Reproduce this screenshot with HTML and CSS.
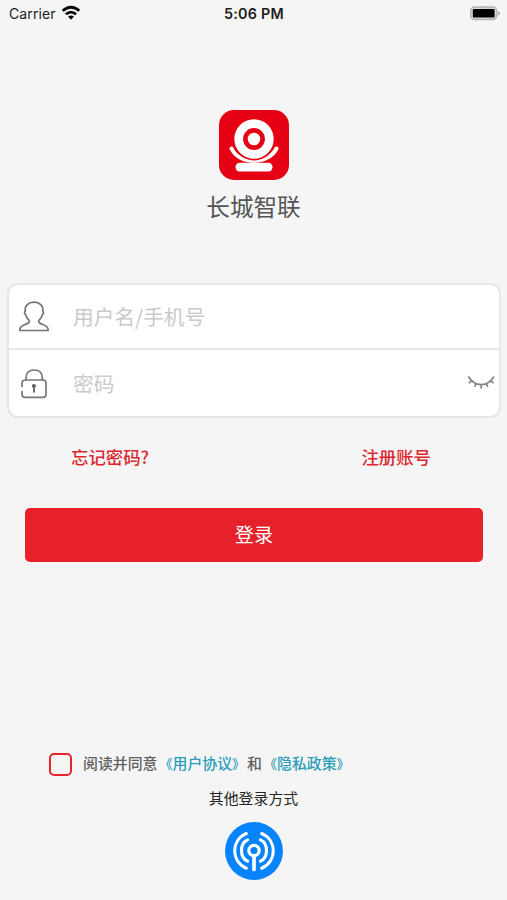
FILE: index.html
```
<!DOCTYPE html>
<html lang="zh-CN">
<head>
<meta charset="utf-8">
<title>长城智联</title>
<link rel="stylesheet" href="styles.css">
</head>
<body>
<header class="status">
  <div class="carrier"><span>Carrier</span>
    <svg width="20" height="16" viewBox="0 0 20 16"><g fill="none" stroke="#080808" stroke-width="2.8"><path d="M1.7 5.8Q10 -1.2 18.3 5.8"/><path d="M4.9 9.3Q10 5 15.1 9.3"/></g><path d="M7 11.6Q10 9.2 13 11.6L10 14.7Z" fill="#080808"/></svg>
  </div>
  <div class="time">5:06 PM</div>
  <svg class="battery" width="32" height="16" viewBox="0 0 32 16"><rect x="1.7" y="2" width="26" height="12.6" rx="4" fill="#d9d9d9" stroke="#b4b4b4" stroke-width="1.5"/><rect x="3.8" y="4" width="21.8" height="8.6" rx="1"/><path d="M29.2 6Q31 6.7 31 8.3T29.2 10.6Z" fill="#adadad"/></svg>
</header>
<main>
  <section class="brand">
    <svg width="72" height="72" viewBox="0 0 72 72"><rect x="1" y="1" width="70" height="70" rx="15" fill="#e60013"/><path d="M13.5 39.5C21 56 50 56 58.5 39.5" fill="none" stroke="#fff" stroke-width="4" stroke-linecap="round"/><circle cx="36" cy="30" r="21.5" fill="#e60013"/><circle cx="36" cy="30" r="19.7" fill="#fff"/><circle cx="36" cy="30" r="8.6" fill="none" stroke="#e60013" stroke-width="4.6"/><rect x="17.5" y="53.7" width="37" height="8.8" rx="4.2" fill="#fff"/></svg>
    <h1>长城智联</h1>
  </section>
  <form class="fields">
    <div class="field">
      <svg class="icon" width="32" height="34" viewBox="0 0 32 34"><path d="M11.2 20.5C12 22 10.7 23.5 7.2 24.5C3.6 25.6 1.5 27.3 1.8 30.5H30.2C30.3 27.3 28.4 25.6 24.8 24.5C21.3 23.5 20 22 20.8 20.5C22.8 18.5 24.1 16.6 24.5 14.4C25.7 13.7 25.8 12 24.8 11.2C25.5 5.7 21.7 2.2 16 2.2S6.5 5.7 7.2 11.2C6.2 12 6.3 13.7 7.5 14.4C7.9 16.6 9.2 18.5 11.2 20.5Z" fill="none" stroke="#747474" stroke-width="1.7" stroke-linejoin="round"/></svg>
      <span class="hint">用户名/手机号</span>
    </div>
    <div class="field">
      <svg class="icon" width="32" height="34" viewBox="0 0 32 34"><g fill="none" stroke="#777" stroke-width="1.7" stroke-linecap="round"><path d="M8.1 12.7V11C8.1 5.6 11.3 3 16.2 3S24.3 5.6 24.3 11V12.7"/><path d="M4 19.5V16.2Q4 13 7.2 13H24.8Q28 13 28 16.2V27.2Q28 30.4 24.8 30.4H7.2Q4 30.4 4 27.2V24.5"/></g><path d="M16 25.5V19" fill="none" stroke="#666" stroke-width="1.9"/><circle cx="15.9" cy="19" r="2.1" fill="#666"/></svg>
      <span class="hint">密码</span>
      <svg class="eye" width="28" height="16" viewBox="0 0 28 16"><path d="M1.3 2.5C8 13.2 20.5 13.2 27 2.5M4.8 6.7L1.8 9.2M9 9.5L7.7 12.8M14.2 10.5V14.4M19.3 9.5L20.8 12.8M23.7 6.7L26.5 9.2" fill="none" stroke="#858585" stroke-width="1.7"/></svg>
    </div>
  </form>
  <nav class="links"><a>忘记密码?</a><a>注册账号</a></nav>
  <button class="login" type="button">登录</button>
</main>
<footer>
  <div class="agree"><i class="check"></i><p>阅读并同意<a><span class="open">《</span>用户协议<span class="close">》</span></a>和<a><span class="open">《</span>隐私政策<span class="close">》</span></a></p></div>
  <p class="other">其他登录方式</p>
  <svg class="wireless" width="60" height="60" viewBox="0 0 60 60"><circle cx="30" cy="30" r="29" fill="#0784fb"/><g fill="none" stroke="#fff" stroke-width="3.1" stroke-linecap="round"><circle cx="30" cy="29.5" r="5.2" stroke-width="3.2"/><path d="M30 36V48.5" stroke-width="3.7"/><path d="M23.5 18.8C15.5 22.7 15.5 36.3 23.5 40.2M36.5 18.8C44.5 22.7 44.5 36.3 36.5 40.2"/><path d="M22.3 12.5C6.8 19 6.8 40.7 22.3 47.2M37.7 12.5C53.2 19 53.2 40.7 37.7 47.2"/></g></svg>
</footer>
</body>
</html>
```
FILE: styles.css
```
* { box-sizing: border-box; }
body {
  margin: 0;
  height: 900px;
  display: flex;
  flex-direction: column;
  overflow: hidden;
  background: #f5f5f5;
  font-family: "Noto Sans CJK SC", sans-serif;
}
svg { display: block; flex: none; }
h1, p { margin: 0; }
.status {
  height: 28px;
  padding: 0 6px 0 9px;
  display: grid;
  grid-template-columns: 1fr auto 1fr;
  align-items: center;
  font-family: Inter, sans-serif;
  font-size: 14px;
  line-height: 28px;
  color: #1c1c1c;
}
.carrier { display: flex; align-items: center; gap: 5px; letter-spacing: 0.12px; }
.carrier svg { margin-top: -2px; }
.time { margin-right: 2px; font-weight: 600; font-size: 14.3px; letter-spacing: 0.3px; }
.battery { justify-self: end; margin-top: -2px; }
.brand { padding-top: 81px; display: flex; flex-direction: column; align-items: center; }
.brand h1 {
  margin-top: 8px;
  font-size: 23.6px;
  line-height: 34px;
  font-weight: 400;
  color: #555;
}
.fields {
  margin: 60px 6px 0 7px;
  height: 135px;
  background: #fff;
  border: 2px solid #e7e7e7;
  border-radius: 11px;
}
.field {
  height: 63px;
  padding: 0 4px 0 9px;
  display: flex;
  align-items: center;
}
.field + .field { height: 68px; padding-top: 1px; border-top: 2px solid #e7e7e7; }
.hint {
  flex: 1;
  margin: -2px 0 0 23px;
  font-size: 20.7px;
  font-weight: 400;
  color: #cacaca;
}
.eye { margin-top: -3px; }
.links {
  height: 40px;
  margin: 18px 76px 0 71px;
  display: flex;
  justify-content: space-between;
  align-items: center;
  font-size: 17.4px;
  font-weight: 500;
  color: #dc2730;
}
.login {
  display: block;
  width: 458px;
  height: 54px;
  margin: 32px 0 0 25px;
  padding: 0 0 2px;
  border: 0;
  border-radius: 5px;
  background: #e6212a;
  color: #fff;
  font: 400 19.2px "Noto Sans CJK SC", sans-serif;
}
footer { margin-top: 186px; display: flex; flex-direction: column; align-items: center; }
.agree {
  align-self: flex-start;
  margin-left: 49px;
  height: 28px;
  display: flex;
  align-items: center;
  gap: 11px;
  font-size: 14.9px;
  font-weight: 500;
  color: #606060;
}
.agree a { color: #2c9db9; }
.agree .open, .agree .close { font-size: 13px; }
.agree .open { margin-left: 2px; }
.agree .close { margin-right: 2px; }
.check { width: 23px; height: 23px; margin-top: 4px; border: 2.5px solid #e6252e; border-radius: 5px; }
.other { height: 24px; margin-top: 10px; font-size: 14.9px; line-height: 24px; color: #262626; }
.wireless { margin-top: 11px; }
```
